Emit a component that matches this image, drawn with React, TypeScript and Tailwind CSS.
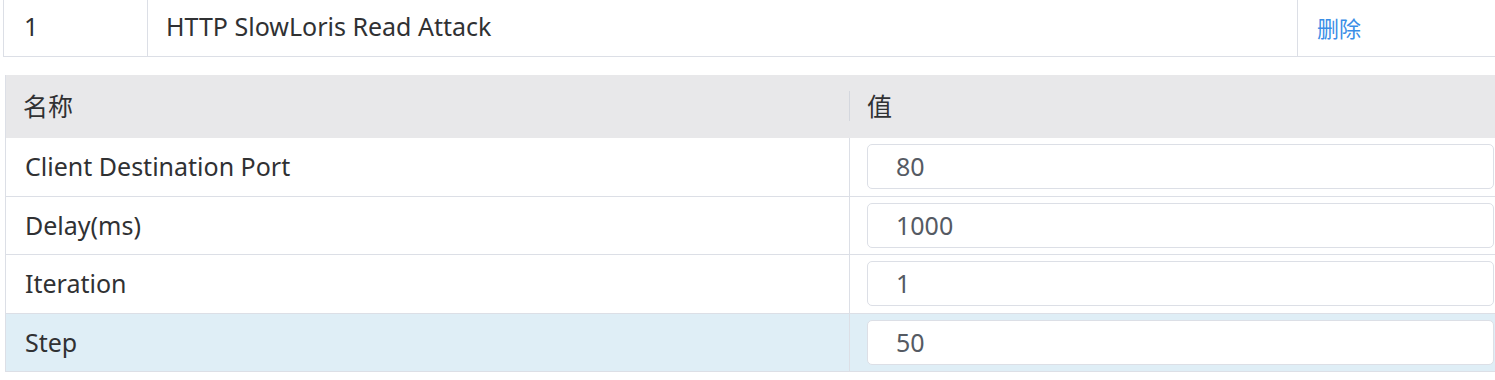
import React from 'react';

const font = { fontFamily: '"Noto Sans", "Noto Sans CJK SC", sans-serif' };

const params = [
    { name: 'Client Destination Port', value: '80' },
    { name: 'Delay(ms)', value: '1000' },
    { name: 'Iteration', value: '1' },
    { name: 'Step', value: '50', active: true },
];

export default function App() {
    return (
        <main className="w-[1495px] h-[380px] overflow-hidden bg-white text-[#303133] text-[25px]" style={font}>
            {/* attack row */}
            <div className="flex h-[57px] ml-[3px] border-l border-b border-[#dcdfe6]">
                <div className="w-[144px] shrink-0 flex items-center pl-[20px] pb-[2px] border-r border-[#dcdfe6]">1</div>
                <div className="w-[1150px] shrink-0 flex items-center pl-[18px] pb-[2px] border-r border-[#dcdfe6]">HTTP SlowLoris Read Attack</div>
                <div className="flex-1 flex items-center pl-[19px] text-[22px] text-[#3a8ee6]">删除</div>
            </div>

            {/* params table */}
            <div className="ml-[5px] mt-[18px] w-[1500px] border-l border-[#dcdfe6]">
                <div className="flex h-[63px] bg-[#e8e8ea]">
                    <div className="w-[844px] shrink-0 flex items-center pl-[17px] relative">
                        名称
                        <span className="absolute right-0 top-[16px] h-[30px] w-px bg-[#d4d7de]" />
                    </div>
                    <div className="flex-1 flex items-center pl-[17px]">值</div>
                </div>
                {params.map((p) => (
                    <div
                        key={p.name}
                        className={`flex h-[58.5px] border-b border-[#dcdfe6] ${p.active ? 'bg-[#dfeef6]' : 'bg-white'}`}
                    >
                        <div className="w-[844px] shrink-0 flex items-center pl-[19px] border-r border-[#dcdfe6]">{p.name}</div>
                        <div className="flex-1 flex items-center pl-[17px] pr-[8px]">
                            <div className="w-[627px] h-[45px] flex items-center pl-[28px] bg-white border border-[#dcdfe6] rounded-[5px] text-[#555a63]">
                                {p.value}
                            </div>
                        </div>
                    </div>
                ))}
            </div>
        </main>
    );
}
